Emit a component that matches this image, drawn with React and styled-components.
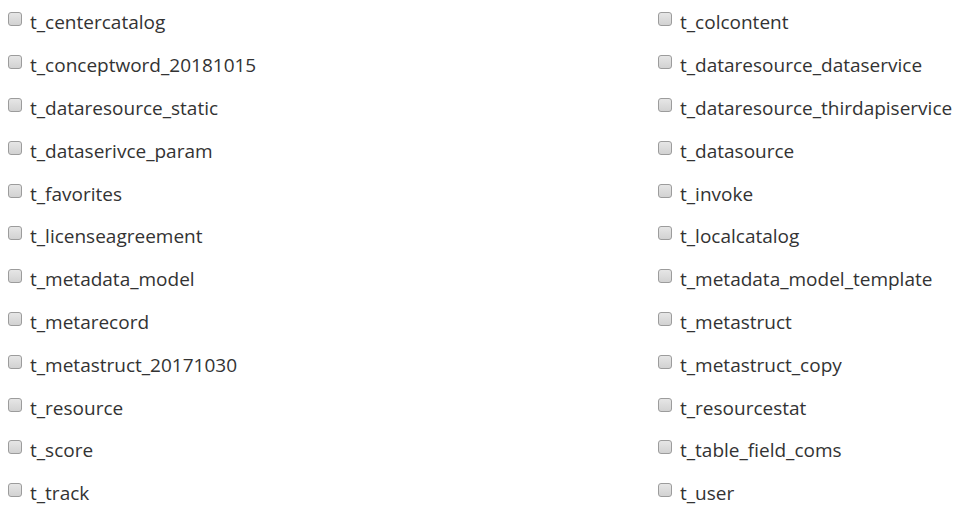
import React from "react";
import styled, { createGlobalStyle } from "styled-components";

const Global = createGlobalStyle`
  html, body { margin: 0; padding: 0; background: #fff; }
  body { margin: 0 8px; font-family: "Open Sans", "Noto Sans", sans-serif; }
`;

const left = [
  "t_centercatalog",
  "t_conceptword_20181015",
  "t_dataresource_static",
  "t_dataserivce_param",
  "t_favorites",
  "t_licenseagreement",
  "t_metadata_model",
  "t_metarecord",
  "t_metastruct_20171030",
  "t_resource",
  "t_score",
  "t_track",
];
const right = [
  "t_colcontent",
  "t_dataresource_dataservice",
  "t_dataresource_thirdapiservice",
  "t_datasource",
  "t_invoke",
  "t_localcatalog",
  "t_metadata_model_template",
  "t_metastruct",
  "t_metastruct_copy",
  "t_resourcestat",
  "t_table_field_coms",
  "t_user",
];

const Grid = styled.div`
  display: grid;
  grid-template-columns: 650px auto;
  grid-auto-flow: column;
  grid-template-rows: repeat(12, 42.8px);
  padding-top: 1px;
`;

const Item = styled.label`
  display: flex;
  align-items: center;
  height: 42.8px;
  font-size: 19px;
  color: #333;
`;

const Box = styled.input.attrs({ type: "checkbox" })`
  appearance: none;
  margin: 0 8px 0 0;
  width: 14px;
  height: 14px;
  border: 1px solid #9c9c9c;
  border-radius: 3px;
  background: linear-gradient(#e6e6e6, #d2d2d2);
  box-sizing: border-box;
  flex: none;
  position: relative;
  top: -3px;
`;

export default function App() {
  return (
    <>
      <Global />
      <Grid>
        {[...left, ...right].map((t) => (
          <Item key={t}>
            <Box />
            {t}
          </Item>
        ))}
      </Grid>
    </>
  );
}
